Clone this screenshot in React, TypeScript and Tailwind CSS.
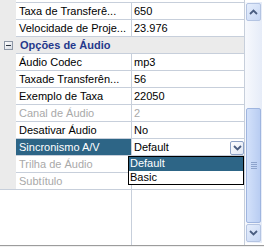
import React from "react";

type Row = {
  label: string;
  value?: string;
  category?: boolean;
  disabled?: boolean;
  selected?: boolean;
  dropdown?: boolean;
};

const rows: Row[] = [
  { label: "Taxa de Transferê...", value: "650" },
  { label: "Velocidade de Proje...", value: "23.976" },
  { label: "Opções de Áudio", category: true },
  { label: "Áudio Codec", value: "mp3" },
  { label: "Taxade Transferên...", value: "56" },
  { label: "Exemplo de Taxa", value: "22050" },
  { label: "Canal de Áudio", value: "2", disabled: true },
  { label: "Desativar Áudio", value: "No" },
  { label: "Sincronismo A/V", value: "Default", selected: true, dropdown: true },
  { label: "Trilha de Áudio", value: "", disabled: true },
  { label: "Subtítulo", value: "", disabled: true },
];

function Chevron({ up }: { up?: boolean }) {
  return (
    <svg width="9" height="6" viewBox="0 0 9 6">
      <path
        d={up ? "M1 5 L4.5 1.5 L8 5" : "M1 1 L4.5 4.5 L8 1"}
        fill="none"
        stroke="#4a5d80"
        strokeWidth="1.8"
      />
    </svg>
  );
}

function ScrollButton({ up }: { up?: boolean }) {
  return (
    <div className="h-[18px] flex items-center justify-center rounded-[2px] border border-[#b4c4e2] bg-gradient-to-br from-[#e6eefc] to-[#c7d7f4]">
      <Chevron up={up} />
    </div>
  );
}

export default function App() {
  return (
    <div className="w-[264px] h-[247px] bg-[#f0f0f0] font-['Liberation_Sans',Arial,sans-serif] text-[11px] text-black">
      <div className="flex h-[246px] bg-white border-b border-[#9c9c9c]">
        <div className="relative w-[245px] flex flex-col">
          {/* top strip */}
          <div className="flex h-[3px] shrink-0">
            <div className="w-4 bg-[#ebebeb]" />
            <div className="flex-1 border-b border-r border-[#c7cfdb]" />
          </div>

          {rows.map((r, i) => {
            const last = i === rows.length - 1;
            if (r.category) {
              return (
                <div key={i} className="flex h-[17px] shrink-0 bg-[#ebebeb]">
                  <div className="w-4 flex items-center justify-center">
                    <div className="w-[9px] h-[9px] border border-[#8d97a6] bg-gradient-to-br from-white to-[#d6dbe3] flex items-center justify-center">
                      <div className="w-[5px] h-[1px] bg-[#2b3440]" />
                    </div>
                  </div>
                  <div className="flex-1 border-b border-r border-[#c7cfdb] pl-[4px] leading-[16px] font-bold text-[#25398b]">
                    {r.label}
                  </div>
                </div>
              );
            }
            return (
              <div key={i} className="flex h-[17px] shrink-0">
                <div className={`w-4 bg-[#ebebeb] ${last ? "border-b border-[#c7cfdb]" : ""}`} />
                <div
                  className={`w-[116px] border-b border-r border-[#c7cfdb] pl-[3px] leading-[16px] whitespace-nowrap overflow-hidden ${
                    r.selected ? "bg-[#2d6586] text-white" : r.disabled ? "text-[#a9a9a9]" : ""
                  }`}
                >
                  {r.label}
                </div>
                <div
                  className={`w-[113px] border-b border-r border-[#c7cfdb] pl-[2px] leading-[16px] flex items-center justify-between ${
                    r.disabled ? "text-[#a9a9a9]" : ""
                  }`}
                >
                  <span>{r.value}</span>
                  {r.dropdown && (
                    <div className="w-[14px] h-[14px] mt-[1px] rounded-[2px] border border-[#8ea2c6] bg-gradient-to-br from-white to-[#dfe6f3] flex items-center justify-center">
                      <Chevron />
                    </div>
                  )}
                </div>
              </div>
            );
          })}

          {/* empty area */}
          <div className="flex flex-1">
            <div className="w-4" />
            <div className="w-[116px] border-r border-[#c7cfdb]" />
            <div className="w-[113px] border-r border-[#c7cfdb]" />
          </div>

          {/* open dropdown list */}
          <div className="absolute left-[128px] top-[156px] w-[116px] h-[29px] border border-black bg-white leading-[13px]">
            <div className="h-[14px] bg-[#2d6586] text-white pl-[1px]">Default</div>
            <div className="h-[13px] pl-[1px]">Basic</div>
          </div>
        </div>

        {/* scrollbar */}
        <div className="w-[17px] mt-[2px] h-[241px] p-[1px] flex flex-col bg-gradient-to-r from-[#f7f9fd] to-[#e6ecf8]">
          <ScrollButton up />
          <div className="h-[87px]" />
          <div className="h-[115px] rounded-[2px] border border-[#9fb5df] bg-gradient-to-r from-[#d3e1fa] to-[#b9cdf2] flex flex-col items-center justify-center gap-[1px]">
            <div className="w-[6px] h-[1px] bg-[#8da3cc]" />
            <div className="w-[6px] h-[1px] bg-[#8da3cc]" />
            <div className="w-[6px] h-[1px] bg-[#8da3cc]" />
            <div className="w-[6px] h-[1px] bg-[#8da3cc]" />
          </div>
          <div className="h-[1px]" />
          <ScrollButton />
        </div>
        <div className="w-[2px]" />
      </div>
    </div>
  );
}
